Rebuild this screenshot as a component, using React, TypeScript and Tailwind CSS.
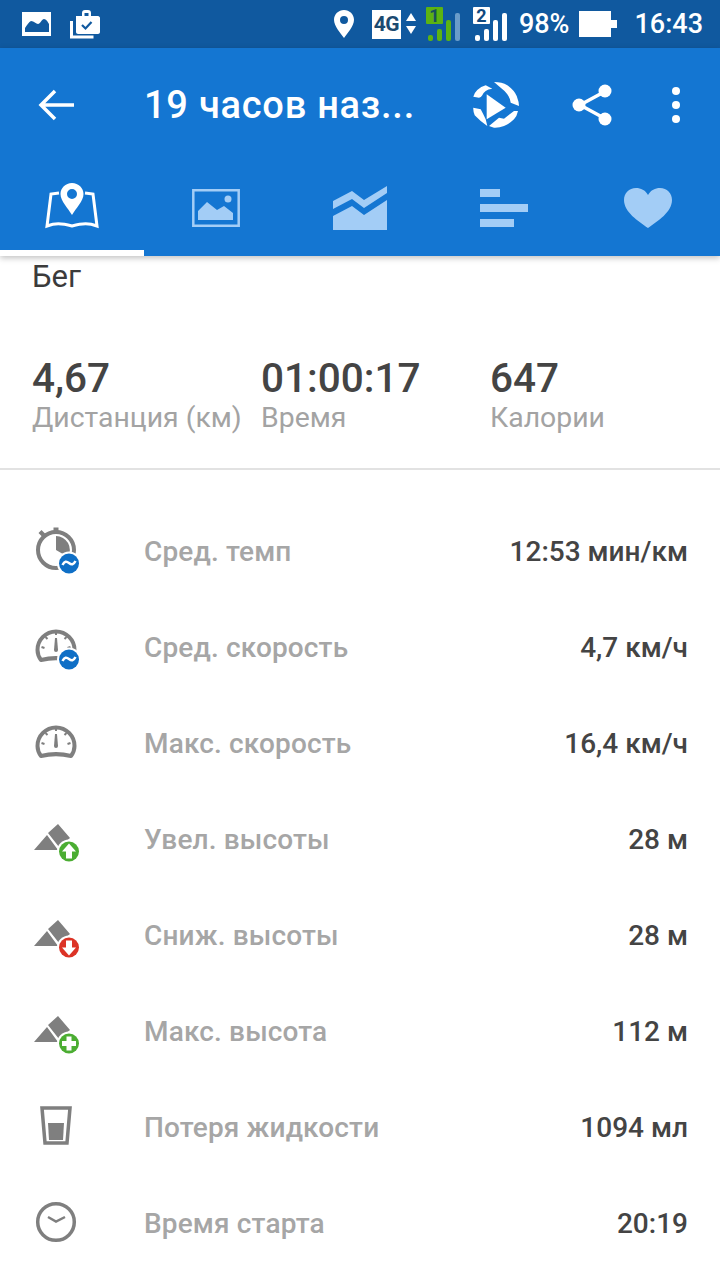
const font = { fontFamily: "Roboto, sans-serif" };

const bars = [
  { h: "h-[6px]" },
  { h: "h-[12px]" },
  { h: "h-[21px]" },
  { h: "h-[28px]" },
];

function Signal({ n, green }: { n: string; green?: boolean }) {
  return (
    <div className="relative h-[34px] w-[35px]">
      <div
        className={
          green
            ? "absolute left-0 top-0 flex h-[17px] w-[17px] items-center justify-center rounded-[1px] bg-[#5cb312] text-[18px] font-bold leading-none text-[#174f5c]"
            : "absolute left-0 top-0 flex h-[17px] w-[17px] items-center justify-center rounded-[1px] bg-white text-[18px] font-bold leading-none text-[#10497f]"
        }
      >
        {n}
      </div>
      <div className="absolute bottom-0 left-[2px] flex items-end gap-[4px]">
        {bars.map((b, i) => (
          <div
            key={i}
            className={
              b.h +
              " w-[5px] rounded-[2px] " +
              (green ? (i === 3 ? "bg-[#6a9cc9]" : "bg-[#5cb312]") : "bg-white")
            }
          />
        ))}
      </div>
    </div>
  );
}

function StatusBar() {
  return (
    <div className="flex h-12 items-center bg-[#10599f] pl-[22px] pr-[17px] text-white">
      <svg width="29" height="24" viewBox="0 0 29 24">
        <path fill="#fff" d="M0 0h29v24H0z" />
        <path fill="#10599f" d="M3 20v-4c2-3 4-6 6-7 3 0 5 3 7 3 2 0 4-5 6-5 2 0 4 3 5 5v8z" />
      </svg>
      <svg className="ml-[19px]" width="30" height="29" viewBox="0 0 30 29">
        <path fill="#fff" d="M6 6h6V3c0-2 1-3 3-3h3c2 0 3 1 3 3v3h7c1 0 2 1 2 2v14c0 1-1 2-2 2H8c-1 0-2-1-2-2zM14.500 6h4V3h-4z" />
        <path fill="none" stroke="#10599f" strokeWidth="2.200" d="M12 15l3.500 3.500 6-6.500" />
        <path fill="none" stroke="#fff" strokeWidth="3" d="M1.500 11v16h22" />
      </svg>
      <svg className="ml-auto" width="20" height="28" viewBox="0 0 20 28">
        <path fill="#fff" fillRule="evenodd" d="M10 0c5.500 0 10 4.300 10 9.800C20 16 13 24 10 28 7 24 0 16 0 9.800 0 4.300 4.500 0 10 0zm0 6a4 4 0 100 8 4 4 0 000-8z" />
      </svg>
      <div className="ml-[18px] flex h-[29px] w-[29px] items-center justify-center bg-white text-[21px] font-bold leading-none tracking-[-0.5px] text-[#1c4a70]">
        4G
      </div>
      <svg className="ml-[5px]" width="10" height="22" viewBox="0 0 10 22">
        <path fill="#fff" d="M5 0l5 8H0zM0 13h10l-5 8z" />
      </svg>
      <div className="ml-[10px]">
        <Signal n="1" green />
      </div>
      <div className="ml-[12px]">
        <Signal n="2" />
      </div>
      <div className="ml-[11px] text-[27px] font-medium leading-none">98%</div>
      <div className="ml-[10px] flex items-center">
        <div className="h-[26px] w-[32px] bg-white" />
        <div className="h-[8px] w-[6px] bg-white" />
      </div>
      <div className="ml-[17px] text-[27px] font-medium leading-none">16:43</div>
    </div>
  );
}

function Toolbar() {
  return (
    <div className="flex h-[112px] items-center pl-[38px] pt-[2px] text-white">
      <svg width="36" height="32" viewBox="0 0 36 32">
        <path fill="none" stroke="#fff" strokeWidth="3.500" d="M36 16H3M17 2L3 16l14 14" />
      </svg>
      <div className="ml-[70px] w-[271px] whitespace-nowrap text-[38px] font-medium leading-none tracking-[0.75px]">
        19 часов наз...
      </div>
      <svg className="ml-[57px]" width="48" height="46" viewBox="0 0 48 46">
        <path fill="#fff" d="M14.700 12.300l19 13.400-19 11.600z" />
        <path fill="#fff" d="M1.300 14.700Q3 10 5.300 8 9 4.500 13.700 3.300l6.600 3.400Q16 7 13.700 9 11 11 10.300 13.300 9 15.500 7 15.700zM22 0Q30 0 35.300 3.300 42 8 44.700 14 47 20 47 24l-8.300-3.300Q38 16 35.300 12.300 32 8 28.700 5.700zM1.300 25.700l7.400 1.600 2.600 5 2.400 5 1.600 6.700-6.600-5-6-5.700Q1 29 1.300 25.700zM17 44l10-8.300 5 1 10-7.700h4q-1 5-4 8.300-4 4-10 6.700-5 2-10 1.700z" />
      </svg>
      <svg className="ml-[52px]" width="40" height="42" viewBox="0 0 40 42">
        <path stroke="#fff" strokeWidth="3.500" d="M8 21L32 8M8 21l24 13" />
        <circle cx="33" cy="7" r="6.500" fill="#fff" />
        <circle cx="7" cy="21" r="6.500" fill="#fff" />
        <circle cx="33" cy="35" r="6.500" fill="#fff" />
      </svg>
      <div className="ml-[60px] flex flex-col gap-[6px]">
        <div className="size-[8px] rounded-full bg-white" />
        <div className="size-[8px] rounded-full bg-white" />
        <div className="size-[8px] rounded-full bg-white" />
      </div>
    </div>
  );
}

function Tabs() {
  return (
    <div className="flex h-[96px]">
      <div className="flex w-[144px] items-center justify-center border-b-[6px] border-white pt-[2px]">
        <svg width="54" height="46" viewBox="0 0 54 46">
          <path fill="none" stroke="#fff" strokeWidth="3" d="M14 10L6 11 2 43c8-3 14-3 25 0 11-3 17-3 25 0L48 11l-8-1" />
          <path fill="#fff" fillRule="evenodd" d="M27 0c6.500 0 11.500 5 11.500 11C38.500 18 31 25 27 32c-4-7-11.500-14-11.500-21C15.500 5 20.500 0 27 0zm0 6a5 5 0 100 10 5 5 0 000-10z" />
        </svg>
      </div>
      <div className="flex w-[144px] items-center justify-center">
        <svg width="48" height="38" viewBox="0 0 48 38">
          <path fill="none" stroke="#a3cdf6" strokeWidth="2.500" d="M1.300 1.300h45.400v35.400H1.300z" />
          <circle cx="36" cy="10" r="3.500" fill="#a3cdf6" />
          <path fill="#a3cdf6" d="M6 31V22l9-9 10 8 7-4 9 7v7z" />
        </svg>
      </div>
      <div className="flex w-[144px] items-center justify-center">
        <svg width="54" height="44" viewBox="0 0 54 44">
          <path fill="#a3cdf6" d="M0 15l19-10 12 9L54 0v7L31 22 19 13 0 23zM0 30l19-10 12 9 23-15v30H0z" />
        </svg>
      </div>
      <div className="flex w-[144px] flex-col items-center justify-center gap-[7px]">
        <div className="mr-[28px] h-[8px] w-[20px] bg-[#a3cdf6]" />
        <div className="h-[8px] w-[48px] bg-[#a3cdf6]" />
        <div className="mr-[14px] h-[8px] w-[34px] bg-[#a3cdf6]" />
      </div>
      <div className="flex w-[144px] items-center justify-center">
        <svg width="48" height="40" viewBox="0 0 48 40">
          <path fill="#a3cdf6" d="M24 40C14 33 0 24 0 12 0 5 5 0 12 0c5 0 9 2 12 7 3-5 7-7 12-7 7 0 12 5 12 12 0 12-14 21-24 28z" />
        </svg>
      </div>
    </div>
  );
}

const grey = "#7f7f7f";

function Badge({ color, children }: { color: string; children: React.ReactNode }) {
  return (
    <g>
      <circle cx="37" cy="39.500" r="12" fill="#fff" />
      <circle cx="37" cy="39.500" r="10" fill={color} />
      {children}
    </g>
  );
}

const wave = <path fill="none" stroke="#fff" strokeWidth="2.500" d="M30.500 41c2-4 4-4 6.500-2s4.500 2 6.500-2" />;

function PaceIcon() {
  return (
    <svg width="56" height="56" viewBox="0 0 56 56">
      <circle cx="24" cy="26" r="18" fill="none" stroke={grey} strokeWidth="4" />
      <path fill={grey} d="M24 12a14 14 0 0112 21L24 26l-12 6 12-6z" />
      <path fill={grey} d="M21.500 3.500h5v6h-5zM6.500 9l3-3 4.500 4.500-3 3z" />
      <Badge color="#0f6fc6">{wave}</Badge>
    </svg>
  );
}

function GaugeIcon({ badge }: { badge?: boolean }) {
  return (
    <svg width="56" height="56" viewBox="0 0 56 56">
      <path fill="none" stroke={grey} strokeWidth="4" strokeLinejoin="round" d="M9 40C6 36 5.500 33 5.500 30a18.500 18.500 0 0137 0c0 3-.5 6-3.500 10-10-2.500-20-2.500-30 0z" />
      <path stroke={grey} strokeWidth="2" d="M24 12v3M9.500 27l3 1M38.500 27l-3 1M13.500 17l2 2M34.500 17l-2 2" />
      <path fill={grey} d="M23 18h2l1 12a2 2 0 01-4 0z" />
      {badge && <Badge color="#0f6fc6">{wave}</Badge>}
    </svg>
  );
}

function Mountains({ children }: { children: React.ReactNode }) {
  return (
    <svg width="56" height="56" viewBox="0 0 56 56">
      <path fill={grey} d="M2 38l13-15 11 15zM16 21l10-9 12 14-11 9z" />
      {children}
    </svg>
  );
}

function GlassIcon() {
  return (
    <svg width="56" height="56" viewBox="0 0 56 56">
      <path fill="none" stroke={grey} strokeWidth="3.500" d="M10 8h28l-3 35H13z" />
      <path fill={grey} d="M16 23h16l-1 17H17z" />
    </svg>
  );
}

function ClockIcon() {
  return (
    <svg width="56" height="56" viewBox="0 0 56 56">
      <circle cx="24" cy="26" r="18.300" fill="none" stroke={grey} strokeWidth="3.500" />
      <path fill="none" stroke={grey} strokeWidth="2.500" d="M16 21l8 4.500 9-4.500" />
    </svg>
  );
}

const arrowUp = <path fill="#fff" d="M37 31.500l7 8h-4v7h-6v-7h-4z" />;
const arrowDown = <path fill="#fff" d="M34 32.500h6v7h4l-7 8-7-8h4z" />;
const plus = <path fill="#fff" d="M34.500 32.500h5V37H44v5h-4.500v4.500h-5V42H30v-5h4.500z" />;

const rows = [
  { icon: <PaceIcon />, label: "Сред. темп", value: "12:53 мин/км" },
  { icon: <GaugeIcon badge />, label: "Сред. скорость", value: "4,7 км/ч" },
  { icon: <GaugeIcon />, label: "Макс. скорость", value: "16,4 км/ч" },
  {
    icon: (
      <Mountains>
        <Badge color="#4bad32">{arrowUp}</Badge>
      </Mountains>
    ),
    label: "Увел. высоты",
    value: "28 м",
  },
  {
    icon: (
      <Mountains>
        <Badge color="#dc3326">{arrowDown}</Badge>
      </Mountains>
    ),
    label: "Сниж. высоты",
    value: "28 м",
  },
  {
    icon: (
      <Mountains>
        <Badge color="#4bad32">{plus}</Badge>
      </Mountains>
    ),
    label: "Макс. высота",
    value: "112 м",
  },
  { icon: <GlassIcon />, label: "Потеря жидкости", value: "1094 мл" },
  { icon: <ClockIcon />, label: "Время старта", value: "20:19" },
];

const stats = [
  { value: "4,67", label: "Дистанция (км)", w: "w-[229px]" },
  { value: "01:00:17", label: "Время", w: "w-[229px]" },
  { value: "647", label: "Калории", w: "" },
];

export default function App() {
  return (
    <div className="h-[1280px] w-[720px] overflow-hidden bg-white" style={font}>
      <StatusBar />
      <div className="relative z-10 bg-[#1476d2] shadow-[0_2px_6px_rgba(0,0,0,0.25)]">
        <Toolbar />
        <Tabs />
      </div>
      <div className="px-8 pt-[4px] text-[31px] leading-[34px] text-[#3b3b3b]">Бег</div>
      <div className="flex px-8 pt-[62px]">
        {stats.map((s) => (
          <div key={s.label} className={s.w}>
            <div className="text-[40.5px] font-medium leading-[44px] text-[#444444]">{s.value}</div>
            <div className="whitespace-nowrap text-[28.4px] leading-[36px] text-[#a3a3a3]">{s.label}</div>
          </div>
        ))}
      </div>
      <div className="mt-[32px] h-[2px] bg-[#e2e2e2]" />
      <div className="pt-[34px]">
        {rows.map((r) => (
          <div key={r.label} className="flex h-[96px] items-center pl-8 pr-8">
            <div className="w-[112px]">{r.icon}</div>
            <div className="text-[28px] font-medium tracking-[0.15px] text-[#a6a6a6]">{r.label}</div>
            <div className="ml-auto text-[28px] font-medium text-[#444444]">{r.value}</div>
          </div>
        ))}
      </div>
    </div>
  );
}
